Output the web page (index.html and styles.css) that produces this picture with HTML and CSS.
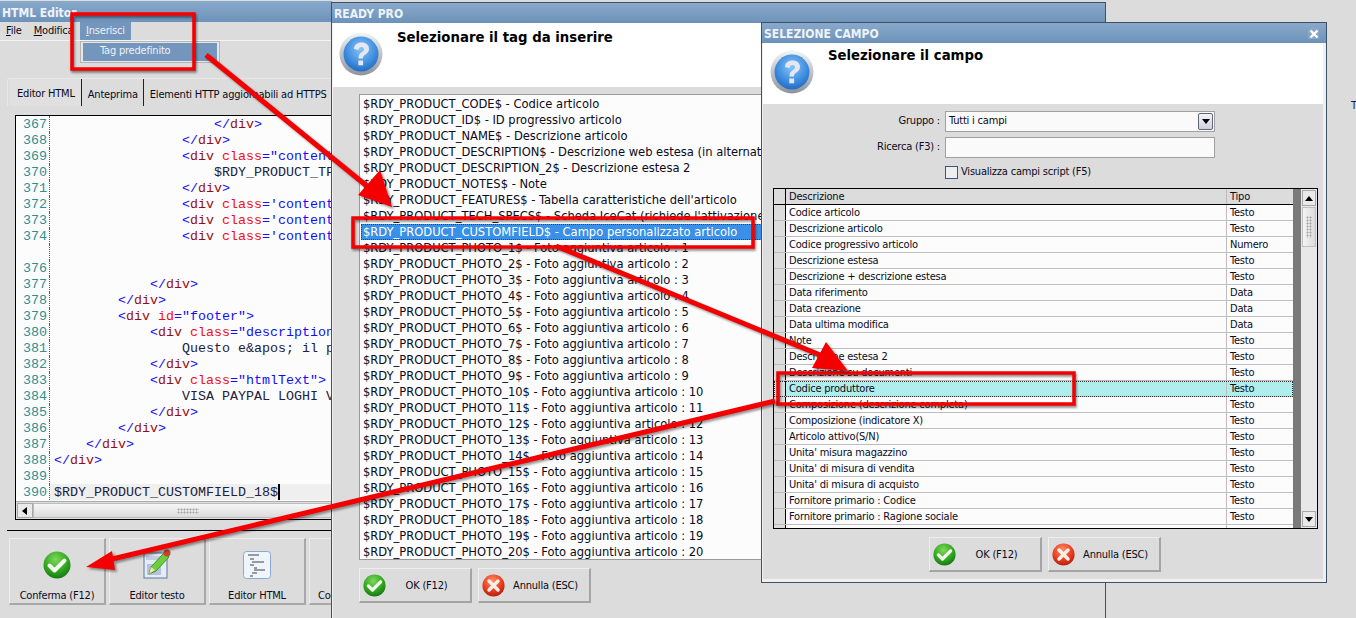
FILE: index.html
```html
<!DOCTYPE html>
<html lang="it">
<head>
<meta charset="utf-8">
<title>READY PRO</title>
<link rel="stylesheet" href="styles.css">
</head>
<body>
<svg class="defs" width="0" height="0" aria-hidden="true">
  <defs>
    <radialGradient id="gHelp" cx="50%" cy="35%" r="70%"><stop offset="0" stop-color="#8cc4f4"/><stop offset="0.6" stop-color="#3f8fe0"/><stop offset="1" stop-color="#1f64bc"/></radialGradient>
    <linearGradient id="gRing" x1="0" y1="0" x2="0" y2="1"><stop offset="0" stop-color="#f2f4f6"/><stop offset="1" stop-color="#8c949c"/></linearGradient>
    <radialGradient id="gOk" cx="45%" cy="30%" r="75%"><stop offset="0" stop-color="#7fd85a"/><stop offset="0.6" stop-color="#2fa51e"/><stop offset="1" stop-color="#126f12"/></radialGradient>
    <radialGradient id="gNo" cx="45%" cy="30%" r="75%"><stop offset="0" stop-color="#ff8f6a"/><stop offset="0.6" stop-color="#ea3a1c"/><stop offset="1" stop-color="#a81a0c"/></radialGradient>
    <symbol id="iHelp" viewBox="0 0 44 44">
      <circle cx="22" cy="22" r="21.5" fill="url(#gRing)"/>
      <circle cx="22" cy="22" r="17.5" fill="url(#gHelp)"/>
      <path d="M15 17c0-4 3-6.500 7.500-6.500S30 13 30 17c0 3-2 4.500-4 5.800-1.500 1-2 1.700-2 3.700h-4.500c0-3.200.8-4.700 3-6.200 1.700-1.100 2.500-1.800 2.500-3 0-1.500-1-2.400-2.600-2.400-1.700 0-2.700 1-2.800 3z" fill="#e4e8f4"/>
      <rect x="19.300" y="28.500" width="4.800" height="4.800" fill="#e4e8f4"/>
    </symbol>
    <symbol id="iOk" viewBox="0 0 28 28">
      <circle cx="14" cy="14" r="13.500" fill="url(#gOk)"/>
      <path d="M6.500 14.500l5 5 10-10" fill="none" stroke="#f4f8f0" stroke-width="4" stroke-linecap="round" stroke-linejoin="round"/>
    </symbol>
    <symbol id="iNo" viewBox="0 0 28 28">
      <circle cx="14" cy="14" r="13.500" fill="url(#gNo)"/>
      <path d="M8.500 8.500l11 11M19.500 8.500l-11 11" fill="none" stroke="#f8efe8" stroke-width="4.200" stroke-linecap="round"/>
    </symbol>
  </defs>
</svg>

<div class="stray">T</div>

<!-- HTML Editor window -->
<section class="win win-editor">
  <header class="titlebar">HTML Editor</header>
  <nav class="menubar">
    <span class="menu-item"><u>F</u>ile</span>
    <span class="menu-item"><u>M</u>odifica</span>
    <span class="menu-item menu-active"><u>I</u>nserisci</span>
    <div class="dropdown"><div class="dropdown-item">Tag predefinito</div></div>
  </nav>
  <div class="editor-body">
    <div class="tabs">
      <span class="tab tab-on">Editor HTML</span>
      <span class="tab">Anteprima</span>
      <span class="tab">Elementi HTTP aggiornabili ad HTTPS</span>
    </div>
    <div class="code">
      <div class="code-rows">
        <div class="cl"><span class="ln">367</span><span class="c i20"><b>&lt;/</b><i>div</i><b>&gt;</b></span></div>
        <div class="cl"><span class="ln">368</span><span class="c i16"><b>&lt;/</b><i>div</i><b>&gt;</b></span></div>
        <div class="cl"><span class="ln">369</span><span class="c i16"><b>&lt;</b><i>div</i> <em>class</em><b>="content</b></span></div>
        <div class="cl"><span class="ln">370</span><span class="c i20">$RDY_PRODUCT_TF</span></div>
        <div class="cl"><span class="ln">371</span><span class="c i16"><b>&lt;/</b><i>div</i><b>&gt;</b></span></div>
        <div class="cl"><span class="ln">372</span><span class="c i16"><b>&lt;</b><i>div</i> <em>class</em><b>='content</b></span></div>
        <div class="cl"><span class="ln">373</span><span class="c i16"><b>&lt;</b><i>div</i> <em>class</em><b>='content</b></span></div>
        <div class="cl"><span class="ln">374</span><span class="c i16"><b>&lt;</b><i>div</i> <em>class</em><b>='content</b></span></div>
        <div class="cl"><span class="ln"></span></div>
        <div class="cl"><span class="ln">376</span></div>
        <div class="cl"><span class="ln">377</span><span class="c i12"><b>&lt;/</b><i>div</i><b>&gt;</b></span></div>
        <div class="cl"><span class="ln">378</span><span class="c i8"><b>&lt;/</b><i>div</i><b>&gt;</b></span></div>
        <div class="cl"><span class="ln">379</span><span class="c i8"><b>&lt;</b><i>div</i> <em>id</em><b>="footer"&gt;</b></span></div>
        <div class="cl"><span class="ln">380</span><span class="c i12"><b>&lt;</b><i>div</i> <em>class</em><b>="description</b></span></div>
        <div class="cl"><span class="ln">381</span><span class="c i16">Questo e&amp;apos; il p</span></div>
        <div class="cl"><span class="ln">382</span><span class="c i12"><b>&lt;/</b><i>div</i><b>&gt;</b></span></div>
        <div class="cl"><span class="ln">383</span><span class="c i12"><b>&lt;</b><i>div</i> <em>class</em><b>="htmlText"&gt;</b></span></div>
        <div class="cl"><span class="ln">384</span><span class="c i16">VISA PAYPAL LOGHI V</span></div>
        <div class="cl"><span class="ln">385</span><span class="c i12"><b>&lt;/</b><i>div</i><b>&gt;</b></span></div>
        <div class="cl"><span class="ln">386</span><span class="c i8"><b>&lt;/</b><i>div</i><b>&gt;</b></span></div>
        <div class="cl"><span class="ln">387</span><span class="c i4"><b>&lt;/</b><i>div</i><b>&gt;</b></span></div>
        <div class="cl"><span class="ln">388</span><span class="c"><b>&lt;/</b><i>div</i><b>&gt;</b></span></div>
        <div class="cl"><span class="ln">389</span></div>
        <div class="cl cl-cur"><span class="ln">390</span><span class="c caret">$RDY_PRODUCT_CUSTOMFIELD_18$</span></div>
      </div>
      <div class="hscroll">
        <span class="sb-btn"><svg width="6" height="8" viewBox="0 0 6 8"><path d="M5 0v8L0 4z" fill="#000"/></svg></span>
        <span class="sb-track"><span class="grip grip-h"></span></span>
      </div>
    </div>
    <div class="toolbar">
      <button class="tool"><svg class="tool-ico ok-big"><use href="#iOk"/></svg><span>Conferma (F12)</span></button>
      <button class="tool">
        <svg class="tool-ico" viewBox="0 0 28 32" width="28" height="32">
          <rect x="1" y="6" width="23" height="25" fill="#e6ecf6" stroke="#5f76a0"/>
          <rect x="3" y="9" width="19" height="4" fill="#c2cde4"/>
          <rect x="4" y="17" width="14" height="11" fill="#b4c2de"/>
          <path d="M6 27l2-7 13-14 5 4-13 14z" fill="#6fcf3a" stroke="#3e9422"/>
          <path d="M6 27l2-7 4 3z" fill="#f0e0c0"/>
          <circle cx="24" cy="6" r="3.500" fill="#c8452c"/>
        </svg>
        <span>Editor testo</span>
      </button>
      <button class="tool">
        <svg class="tool-ico" viewBox="0 0 28 28" width="28" height="28">
          <rect x="0.500" y="0.500" width="27" height="27" rx="3" fill="#eef5fd" stroke="#8ea6d4"/>
          <path d="M5 4h11M7 8h4M9 11h12M7 14h4M11 17h3M11 19h11M9 22h5M7 25h3" stroke="#7c7c80" stroke-width="1.500"/>
        </svg>
        <span>Editor HTML</span>
      </button>
      <button class="tool tool-cut"><span class="tool-ico-space"></span><span>Codice</span></button>
    </div>
  </div>
</section>

<!-- READY PRO tag window -->
<section class="win win-ready">
  <header class="titlebar">READY PRO</header>
  <div class="dlg-head">
    <svg class="help"><use href="#iHelp"/></svg>
    <h1 class="dlg-title">Selezionare il tag da inserire</h1>
  </div>
  <div class="ready-body">
    <div class="listbox">
      <div>$RDY_PRODUCT_CODE$ - Codice articolo</div>
      <div>$RDY_PRODUCT_ID$ - ID progressivo articolo</div>
      <div>$RDY_PRODUCT_NAME$ - Descrizione articolo</div>
      <div>$RDY_PRODUCT_DESCRIPTION$ - Descrizione web estesa (in alternativa alla descrizione estesa)</div>
      <div>$RDY_PRODUCT_DESCRIPTION_2$ - Descrizione estesa 2</div>
      <div>$RDY_PRODUCT_NOTES$ - Note</div>
      <div>$RDY_PRODUCT_FEATURES$ - Tabella caratteristiche dell'articolo</div>
      <div>$RDY_PRODUCT_TECH_SPECS$ - Scheda IceCat (richiede l'attivazione del servizio)</div>
      <div class="list-sel">$RDY_PRODUCT_CUSTOMFIELD$ - Campo personalizzato articolo</div>
      <div>$RDY_PRODUCT_PHOTO_1$ - Foto aggiuntiva articolo : 1</div>
      <div>$RDY_PRODUCT_PHOTO_2$ - Foto aggiuntiva articolo : 2</div>
      <div>$RDY_PRODUCT_PHOTO_3$ - Foto aggiuntiva articolo : 3</div>
      <div>$RDY_PRODUCT_PHOTO_4$ - Foto aggiuntiva articolo : 4</div>
      <div>$RDY_PRODUCT_PHOTO_5$ - Foto aggiuntiva articolo : 5</div>
      <div>$RDY_PRODUCT_PHOTO_6$ - Foto aggiuntiva articolo : 6</div>
      <div>$RDY_PRODUCT_PHOTO_7$ - Foto aggiuntiva articolo : 7</div>
      <div>$RDY_PRODUCT_PHOTO_8$ - Foto aggiuntiva articolo : 8</div>
      <div>$RDY_PRODUCT_PHOTO_9$ - Foto aggiuntiva articolo : 9</div>
      <div>$RDY_PRODUCT_PHOTO_10$ - Foto aggiuntiva articolo : 10</div>
      <div>$RDY_PRODUCT_PHOTO_11$ - Foto aggiuntiva articolo : 11</div>
      <div>$RDY_PRODUCT_PHOTO_12$ - Foto aggiuntiva articolo : 12</div>
      <div>$RDY_PRODUCT_PHOTO_13$ - Foto aggiuntiva articolo : 13</div>
      <div>$RDY_PRODUCT_PHOTO_14$ - Foto aggiuntiva articolo : 14</div>
      <div>$RDY_PRODUCT_PHOTO_15$ - Foto aggiuntiva articolo : 15</div>
      <div>$RDY_PRODUCT_PHOTO_16$ - Foto aggiuntiva articolo : 16</div>
      <div>$RDY_PRODUCT_PHOTO_17$ - Foto aggiuntiva articolo : 17</div>
      <div>$RDY_PRODUCT_PHOTO_18$ - Foto aggiuntiva articolo : 18</div>
      <div>$RDY_PRODUCT_PHOTO_19$ - Foto aggiuntiva articolo : 19</div>
      <div>$RDY_PRODUCT_PHOTO_20$ - Foto aggiuntiva articolo : 20</div>
    </div>
    <div class="btn-row">
      <button class="btn"><svg class="btn-ico"><use href="#iOk"/></svg><span>OK (F12)</span></button>
      <button class="btn"><svg class="btn-ico"><use href="#iNo"/></svg><span>Annulla (ESC)</span></button>
    </div>
  </div>
</section>

<!-- SELEZIONE CAMPO window -->
<section class="win win-campo">
  <header class="titlebar">SELEZIONE CAMPO<span class="close"><svg width="10" height="10" viewBox="0 0 10 10"><path d="M1.500 1.500l7 7M8.500 1.500l-7 7" stroke="#fff" stroke-width="2.400"/></svg></span></header>
  <div class="dlg-head dlg-head-campo">
    <svg class="help"><use href="#iHelp"/></svg>
    <h1 class="dlg-title">Selezionare il campo</h1>
  </div>
  <div class="campo-body">
    <div class="form">
      <label class="form-label">Gruppo :</label>
      <div class="combo"><span>Tutti i campi</span><span class="combo-btn"><svg width="8" height="5" viewBox="0 0 8 5"><path d="M0 0h8L4 5z" fill="#000"/></svg></span></div>
      <label class="form-label">Ricerca (F3) :</label>
      <div class="combo"></div>
      <span></span>
      <div class="check"><span class="check-box"></span>Visualizza campi script (F5)</div>
    </div>
    <div class="grid">
      <div class="grid-main">
        <div class="gr gr-head"><span class="g0"></span><span class="g1">Descrizione</span><span class="g2">Tipo</span></div>
        <div class="gr"><span class="g0"></span><span class="g1">Codice articolo</span><span class="g2">Testo</span></div>
        <div class="gr"><span class="g0"></span><span class="g1">Descrizione articolo</span><span class="g2">Testo</span></div>
        <div class="gr"><span class="g0"></span><span class="g1">Codice progressivo articolo</span><span class="g2">Numero</span></div>
        <div class="gr"><span class="g0"></span><span class="g1">Descrizione estesa</span><span class="g2">Testo</span></div>
        <div class="gr"><span class="g0"></span><span class="g1">Descrizione + descrizione estesa</span><span class="g2">Testo</span></div>
        <div class="gr"><span class="g0"></span><span class="g1">Data riferimento</span><span class="g2">Data</span></div>
        <div class="gr"><span class="g0"></span><span class="g1">Data creazione</span><span class="g2">Data</span></div>
        <div class="gr"><span class="g0"></span><span class="g1">Data ultima modifica</span><span class="g2">Data</span></div>
        <div class="gr"><span class="g0"></span><span class="g1">Note</span><span class="g2">Testo</span></div>
        <div class="gr"><span class="g0"></span><span class="g1">Descrizione estesa 2</span><span class="g2">Testo</span></div>
        <div class="gr"><span class="g0"></span><span class="g1">Descrizione su documenti</span><span class="g2">Testo</span></div>
        <div class="gr gr-sel"><span class="g0"></span><span class="g1">Codice produttore</span><span class="g2">Testo</span></div>
        <div class="gr"><span class="g0"></span><span class="g1">Composizione (descrizione completa)</span><span class="g2">Testo</span></div>
        <div class="gr"><span class="g0"></span><span class="g1">Composizione (indicatore X)</span><span class="g2">Testo</span></div>
        <div class="gr"><span class="g0"></span><span class="g1">Articolo attivo(S/N)</span><span class="g2">Testo</span></div>
        <div class="gr"><span class="g0"></span><span class="g1">Unita' misura magazzino</span><span class="g2">Testo</span></div>
        <div class="gr"><span class="g0"></span><span class="g1">Unita' di misura di vendita</span><span class="g2">Testo</span></div>
        <div class="gr"><span class="g0"></span><span class="g1">Unita' di misura di acquisto</span><span class="g2">Testo</span></div>
        <div class="gr"><span class="g0"></span><span class="g1">Fornitore primario : Codice</span><span class="g2">Testo</span></div>
        <div class="gr"><span class="g0"></span><span class="g1">Fornitore primario : Ragione sociale</span><span class="g2">Testo</span></div>
        <div class="gr"><span class="g0"></span><span class="g1"></span><span class="g2"></span></div>
      </div>
      <div class="grid-gap"></div>
      <div class="vscroll">
        <span class="sb-btn sb-v"><svg width="8" height="5" viewBox="0 0 8 5"><path d="M0 5h8L4 0z" fill="#000"/></svg></span>
        <span class="sb-thumb"><span class="grip grip-v"></span></span>
        <span class="sb-fill"></span>
        <span class="sb-btn sb-v"><svg width="8" height="5" viewBox="0 0 8 5"><path d="M0 0h8L4 5z" fill="#000"/></svg></span>
      </div>
    </div>
    <div class="btn-row btn-row-campo">
      <button class="btn"><svg class="btn-ico"><use href="#iOk"/></svg><span>OK (F12)</span></button>
      <button class="btn"><svg class="btn-ico"><use href="#iNo"/></svg><span>Annulla (ESC)</span></button>
    </div>
  </div>
</section>

<!-- Red annotations lying over everything -->
<svg class="notes" width="1356" height="618" viewBox="0 0 1356 618" aria-hidden="true">
  <g class="note-shapes">
    <rect x="72" y="14" width="122" height="55"/>
    <rect x="353" y="218" width="400" height="29"/>
    <rect x="778" y="373" width="296" height="31"/>
  </g>
  <g class="note-arrows">
    <path d="M206 55L373 191"/>
    <polygon points="392,207 358,195 380,170"/>
    <path d="M556 246L825 357"/>
    <polygon points="848,371 812,368 826,342"/>
    <path d="M775 401L108 560"/>
    <polygon points="86,567 112,551 115,570"/>
  </g>
</svg>
</body>
</html>
```

FILE: styles.css
```css
* { box-sizing: border-box; }
html, body { margin: 0; padding: 0; }
body {
  position: relative;
  width: 1356px;
  height: 618px;
  overflow: hidden;
  background: #dcdcdc;
  font: 11px/16px "DejaVu Sans Condensed", "DejaVu Sans", "Liberation Sans", sans-serif;
  font-stretch: condensed;
  letter-spacing: -0.2px;
  color: #0a0a20;
}
.defs { position: absolute; }
.stray { position: absolute; left: 1351px; top: 98px; color: #1a1a50; }

/* windows on the desktop */
.win {
  position: absolute;
  display: flex;
  flex-direction: column;
  overflow: hidden;
  background: #dcdcdc;
}
.win-editor { left: 0; top: 1px; width: 332px; height: 617px; }
.win-ready {
  left: 331px; top: 2px; width: 775px; height: 616px;
  border: 1px solid #3e5168;
  border-bottom: 0;
  box-shadow: inset 1px 0 0 #f0f0f0;
}
.win-campo {
  left: 761px; top: 22px; width: 566px; height: 561px;
  border: 1px solid #3e5168;
  background: #efefef;
}
.titlebar {
  flex: none;
  display: flex;
  justify-content: space-between;
  align-items: center;
  height: 20px;
  padding: 1px 2px 0;
  font-weight: bold;
  font-size: 12px;
  letter-spacing: normal;
  color: #eef3fa;
  background: linear-gradient(#89a9cb, #6d92b9);
}
.win-editor .titlebar { height: 21px; padding: 2px 0 0 2px; font-size: 12px; }
.close {
  display: flex;
  align-items: center;
  justify-content: center;
  width: 11px;
  height: 11px;
  margin-right: 5px;
  background: #8aa6c6;
}

/* menu */
.menubar {
  position: relative;
  flex: none;
  display: flex;
  align-items: center;
  height: 19px;
  padding-left: 6px;
  border-bottom: 1px solid #f4f4f4;
  gap: 12px;
}
.menu-item { line-height: 18px; }
.menu-active {
  position: absolute;
  left: 80px;
  top: 0;
  width: 51px;
  height: 18px;
  padding-left: 6px;
  color: #eef2f8;
  background: #7496bd;
}
.dropdown {
  position: absolute;
  left: 80px;
  top: 19px;
  width: 140px;
  height: 22px;
  padding: 1px 2px;
  background: #e6e6e6;
  border: 1px solid #b4b4b4;
  z-index: 2;
}
.dropdown-item {
  height: 18px;
  padding-left: 17px;
  color: #eef2f8;
  background: #7496bd;
}

/* editor */
.editor-body {
  flex: 1;
  display: flex;
  flex-direction: column;
  padding: 37px 0 0 7px;
  min-height: 0;
}
.tabs {
  flex: none;
  display: flex;
  height: 28px;
  padding-left: 2px;
  border: 1px solid #e8e8e8;
  border-bottom: 0;
  border-radius: 3px 0 0 0;
}
.tab {
  padding: 8px 5px 0 6px;
  height: 27px;
  white-space: nowrap;
  border-right: 1px solid #222;
}
.tab-on { padding: 7px 6px 0 7px; background: #e0e0e0; }
.tab:last-child { border-right: 0; }
.code {
  flex: none;
  width: 325px;
  height: 405px;
  margin: 9px 0 0 8px;
  background: #fcfcfc;
  border: 1px solid #000;
  border-right: 0;
  overflow: hidden;
}
.code-rows { height: 385px; overflow: hidden; }
.cl {
  display: flex;
  height: 16px;
  font: 13.330px/17px "Liberation Mono", "Courier New", monospace;
  letter-spacing: normal;
  white-space: pre;
  color: #202040;
}
.ln {
  flex: none;
  width: 34px;
  padding-right: 2px;
  text-align: right;
  color: #2f8f8f;
  border-right: 1px dotted #2a7a7a;
}
.c { padding-left: 4px; }
.c b { font-weight: normal; color: #1010f0; }
.c i { font-style: normal; color: #901010; }
.c em { font-style: normal; color: #f01010; }
.i4 { padding-left: 36px; }
.i8 { padding-left: 68px; }
.i12 { padding-left: 100px; }
.i16 { padding-left: 132px; }
.i20 { padding-left: 164px; }
.cl-cur { background: #efefef; }
.cl-cur .ln { background: #fcfcfc; }
.caret { border-right: 1px solid #000; height: 16px; box-shadow: 1px 0 0 #000; }
.hscroll {
  display: flex;
  height: 18px;
  padding: 1px;
  background: #dedede;
  border-top: 1px solid #aaa;
}
.sb-btn {
  flex: none;
  display: flex;
  align-items: center;
  justify-content: center;
  width: 16px;
  background: #eaeaea;
  border: 1px solid #a8a8a8;
}
.sb-track {
  flex: 1;
  display: flex;
  align-items: center;
  justify-content: center;
  padding-left: 4px;
  background: linear-gradient(#f6f6f6, #dcdcdc);
  border: 1px solid #bdbdbd;
}
.grip { display: block; background-image: radial-gradient(#a8a8a8 45%, transparent 50%); }
.grip-h { width: 22px; height: 6px; background-size: 3px 3px; }
.grip-v { width: 6px; height: 22px; background-size: 3px 3px; }

.toolbar {
  flex: none;
  display: flex;
  gap: 3px;
  height: 76px;
  margin-top: 10px;
  padding: 7px 0 0 2px;
  border-top: 1px solid #000;
}
.tool {
  flex: none;
  display: flex;
  flex-direction: column;
  align-items: center;
  justify-content: flex-end;
  width: 97px;
  height: 67px;
  padding: 0;
  font: inherit;
  font-stretch: condensed;
  letter-spacing: inherit;
  line-height: 14px;
  color: inherit;
  background: #dcdcdc;
  border: 1px solid #a8a8a8;
  border-top-color: #eee;
  border-left-color: #eee;
  border-width: 1px 2px 2px 1px;
}
.tool-ico { margin-bottom: 10px; }
.ok-big { width: 28px; height: 28px; }
.tool-cut { align-items: flex-start; padding-left: 8px; }

/* dialog parts */
.dlg-head {
  flex: none;
  display: flex;
  height: 64px;
  margin-left: 1px;
  padding: 9px 0 0 6px;
  background: #fff;
}
.dlg-head-campo { height: 61px; margin: 0 3px 0 1px; padding: 7px 0 0 7px; }
.help { flex: none; width: 44px; height: 44px; }
.dlg-title {
  margin: 0 0 0 14px;
  font-size: 14.750px;
  line-height: 10px;
  letter-spacing: normal;
  font-weight: bold;
  color: #000;
}
.ready-body {
  flex: 1;
  margin-left: 1px;
  padding: 7px 0 0 26px;
  background: #dcdcdc;
}
.listbox {
  width: 500px;
  height: 466px;
  padding: 1px 0 0 3px;
  font-size: 12.800px;
  letter-spacing: normal;
  background: #fcfcfc;
  border: 1px solid #9a9a9a;
  overflow: hidden;
  white-space: nowrap;
}
.list-sel {
  margin-left: -2px;
  padding-left: 2px;
  color: #fff;
  background: #3a8fe6;
  outline: 1px dotted #204870;
  outline-offset: -1px;
}
.btn-row { display: flex; gap: 6px; margin-top: 8px; }
.btn {
  display: flex;
  align-items: center;
  width: 113px;
  height: 35px;
  padding: 0 3px;
  font: inherit;
  font-stretch: condensed;
  letter-spacing: inherit;
  color: inherit;
  background: #dcdcdc;
  border: 1px solid #eee;
  border-right: 2px solid #a4a4a4;
  border-bottom: 2px solid #a4a4a4;
}
.btn span { flex: 1; padding-top: 2px; text-align: center; }
.btn-ico { flex: none; width: 23px; height: 23px; }

.campo-body {
  flex: 1;
  display: flex;
  flex-direction: column;
  margin: 0 3px 3px 1px;
  padding: 6px 5px 0 10px;
  background: #dcdcdc;
}
.form {
  display: grid;
  grid-template-columns: 170px 270px;
  grid-template-rows: 22px 22px 20px;
  row-gap: 4px;
  column-gap: 2px;
  align-items: center;
}
.form-label { text-align: right; padding-right: 3px; }
.combo {
  display: flex;
  align-items: center;
  justify-content: space-between;
  height: 21px;
  padding-left: 3px;
  background: #fafafa;
  border: 1px solid #a0a0a0;
}
.combo-btn {
  display: flex;
  align-items: center;
  justify-content: center;
  width: 15px;
  height: 17px;
  margin-right: 1px;
  background: linear-gradient(#f4f4fa, #d0d0de);
  border: 1px solid #606878;
  border-radius: 2px;
}
.check { display: flex; align-items: center; gap: 3px; }
.check-box { width: 13px; height: 13px; background: #eee; border: 1px solid #2f5a88; }

.grid {
  display: flex;
  height: 341px;
  margin-top: 6px;
  background: #fcfcfc;
  border: 1px solid #000;
  overflow: hidden;
}
.grid-main { flex: none; width: 519px; }
.gr {
  display: flex;
  height: 16px;
  border-bottom: 1px solid #bdbdbd;
  white-space: nowrap;
  line-height: 15px;
}
.g0 { flex: none; width: 12px; background: #dcdcdc; border-right: 1px solid #000; }
.g1 { flex: none; width: 441px; padding-left: 3px; overflow: hidden; border-right: 1px solid #bdbdbd; }
.g2 { flex: 1; padding-left: 3px; }
.gr-head { background: #dcdcdc; border-bottom: 1px solid #000; }
.gr-sel { background: #b0eeee; outline: 1px dotted #333; outline-offset: -1px; }
.grid-gap { flex: none; width: 8px; background: #7a7a7a; }
.vscroll {
  flex: 1;
  display: flex;
  flex-direction: column;
  padding: 1px;
  background: #e8e8e8;
}
.sb-v { width: auto; height: 16px; }
.sb-thumb {
  display: flex;
  align-items: center;
  justify-content: center;
  height: 40px;
  margin-top: 1px;
  background: linear-gradient(90deg, #f4f4f4, #dcdcdc);
  border: 1px solid #c0c0c0;
}
.sb-fill { flex: 1; }
.btn-row-campo { justify-content: flex-start; margin: 8px 0 0 156px; }

/* annotations */
.notes { position: absolute; left: 0; top: 0; z-index: 5; pointer-events: none; }
.note-shapes rect { fill: none; stroke: #f40000; stroke-width: 3.500; filter: drop-shadow(1px 2px 1px rgba(0,0,0,.45)); }
.note-arrows { filter: drop-shadow(2px 2px 1px rgba(0,0,0,.4)); }
.note-arrows path { fill: none; stroke: #f40000; stroke-width: 5; }
.note-arrows polygon { fill: #f40000; }
```
